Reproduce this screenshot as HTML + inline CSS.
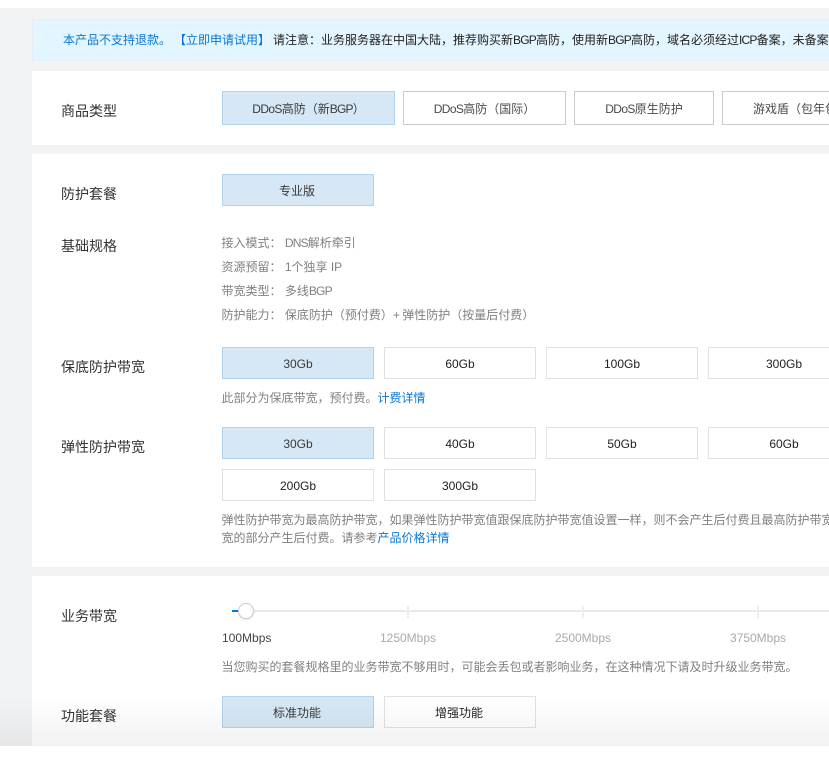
<!DOCTYPE html>
<html><head><meta charset="utf-8">
<style>
html,body{margin:0;padding:0;background:#fff;}
body{width:829px;height:766px;overflow:hidden;position:relative;font-family:"Liberation Sans","Noto Sans CJK SC",sans-serif;font-size:12px;color:#333;}
#bg{position:absolute;left:0;top:8px;width:829px;height:738px;background:#f2f3f5;}
.p{position:absolute;left:32px;width:797px;background:#fff;}
.a{position:absolute;white-space:nowrap;}
.l{position:absolute;left:61px;font-size:14px;line-height:20px;color:#333;white-space:nowrap;}
.b{position:absolute;box-sizing:border-box;border:1px solid #e1e1e1;background:#fff;text-align:center;color:#222;white-space:nowrap;overflow:hidden;padding-top:1px;}
.b.g{border-color:#ccc;color:#4a4a4a;}
.b.s{background:#d6e8f5;border-color:#b2d3ee;color:#3a3a3a;}
.b.c{padding-right:2px;}
.t{position:absolute;left:221.5px;color:#808080;line-height:20px;white-space:nowrap;}
.k{color:#0a78d2;}
.n{letter-spacing:-.8px;}
.d{letter-spacing:-.65px;}
.tick{position:absolute;top:606px;width:2px;height:12px;background:#eee;}
.m{position:absolute;top:630px;line-height:16px;color:#aaa;width:80px;text-align:center;font-size:12px;}
#fade{position:absolute;left:0;top:696px;width:829px;height:50px;background:linear-gradient(rgba(0,0,0,0),rgba(0,0,0,.05));}
</style></head><body>
<div id="bg"></div>
<div class="p" style="top:19px;height:42px;box-sizing:border-box;background:#e3f5fe;border:1px solid #e6eef3;border-right:0;"></div>
<div class="p" style="top:71px;height:74px;"></div>
<div class="p" style="top:154px;height:413px;"></div>
<div class="p" style="top:576px;height:170px;"></div>

<div class="a" style="left:63px;top:31px;line-height:18px;color:#222;"><span class="k">本产品不支持退款。</span><span class="k" style="margin-left:9px;margin-right:3px;">【立即申请试用】</span>请注意：业务服务器在中国大陆，推荐购买新<span class="n">BGP</span>高防，使用新<span class="n">BGP</span>高防，域名必须经过<span class="n">ICP</span>备案，未备案</div>

<div class="l" style="top:101px;">商品类型</div>
<div class="b s" style="left:222px;top:91px;width:173px;height:34px;line-height:32px;"><span class="d">DDoS</span>高防（新<span class="n">BGP</span>）</div>
<div class="b g" style="left:403px;top:91px;width:163px;height:34px;line-height:32px;"><span class="d">DDoS</span>高防（国际）</div>
<div class="b g" style="left:574px;top:91px;width:140px;height:34px;line-height:32px;"><span class="d">DDoS</span>原生防护</div>
<div class="b g" style="left:722px;top:91px;width:140px;height:34px;line-height:32px;text-align:left;padding-left:30px;">游戏盾（包年包月）</div>

<div class="l" style="top:184px;">防护套餐</div>
<div class="b s c" style="left:222px;top:174px;width:152px;height:32px;line-height:30px;">专业版</div>

<div class="l" style="top:236px;">基础规格</div>
<div class="t" style="top:233px;">接入模式：&nbsp;<span class="n">DNS</span>解析牵引</div>
<div class="t" style="top:257px;">资源预留：&nbsp;1个独享 IP</div>
<div class="t" style="top:281px;">带宽类型：&nbsp;多线<span class="n">BGP</span></div>
<div class="t" style="top:305px;">防护能力：&nbsp;保底防护（预付费）<span style="letter-spacing:-.5px;">+ </span>弹性防护（按量后付费）</div>

<div class="l" style="top:357px;">保底防护带宽</div>
<div class="b s" style="left:222px;top:347px;width:152px;height:32px;line-height:30px;">30Gb</div>
<div class="b" style="left:384px;top:347px;width:152px;height:32px;line-height:30px;">60Gb</div>
<div class="b" style="left:546px;top:347px;width:152px;height:32px;line-height:30px;">100Gb</div>
<div class="b" style="left:708px;top:347px;width:152px;height:32px;line-height:30px;">300Gb</div>
<div class="t" style="top:388px;">此部分为保底带宽，预付费。<span class="k">计费详情</span></div>

<div class="l" style="top:437px;">弹性防护带宽</div>
<div class="b s" style="left:222px;top:427px;width:152px;height:32px;line-height:30px;">30Gb</div>
<div class="b" style="left:384px;top:427px;width:152px;height:32px;line-height:30px;">40Gb</div>
<div class="b" style="left:546px;top:427px;width:152px;height:32px;line-height:30px;">50Gb</div>
<div class="b" style="left:708px;top:427px;width:152px;height:32px;line-height:30px;">60Gb</div>
<div class="b" style="left:222px;top:469px;width:152px;height:32px;line-height:30px;">200Gb</div>
<div class="b" style="left:384px;top:469px;width:152px;height:32px;line-height:30px;">300Gb</div>
<div class="t" style="top:510px;">弹性防护带宽为最高防护带宽，如果弹性防护带宽值跟保底防护带宽值设置一样，则不会产生后付费且最高防护带宽</div>
<div class="t" style="top:528px;">宽的部分产生后付费。请参考<span class="k">产品价格详情</span></div>

<div class="l" style="top:606px;">业务带宽</div>
<div class="a" style="left:232px;top:610px;width:597px;height:2px;background:#eaeaea;"></div>
<div class="a" style="left:232px;top:610px;width:10px;height:2px;background:#0a78d2;"></div>
<div class="tick" style="left:407px;"></div>
<div class="tick" style="left:582px;"></div>
<div class="tick" style="left:757px;"></div>
<div class="a" style="left:238px;top:603px;width:16px;height:16px;box-sizing:border-box;border-radius:50%;background:#fff;border:1px solid #c8ccd6;box-shadow:0 1px 2px rgba(0,0,0,.12);"></div>
<div class="a" style="left:222px;top:630px;line-height:16px;color:#444;">100Mbps</div>
<div class="m" style="left:368px;">1250Mbps</div>
<div class="m" style="left:543px;">2500Mbps</div>
<div class="m" style="left:718px;">3750Mbps</div>
<div class="t" style="top:657px;">当您购买的套餐规格里的业务带宽不够用时，可能会丢包或者影响业务，在这种情况下请及时升级业务带宽。</div>

<div class="l" style="top:706px;">功能套餐</div>
<div class="b s c" style="left:222px;top:696px;width:152px;height:32px;line-height:30px;">标准功能</div>
<div class="b c" style="left:384px;top:696px;width:152px;height:32px;line-height:30px;">增强功能</div>
<div id="fade"></div>
</body></html>
